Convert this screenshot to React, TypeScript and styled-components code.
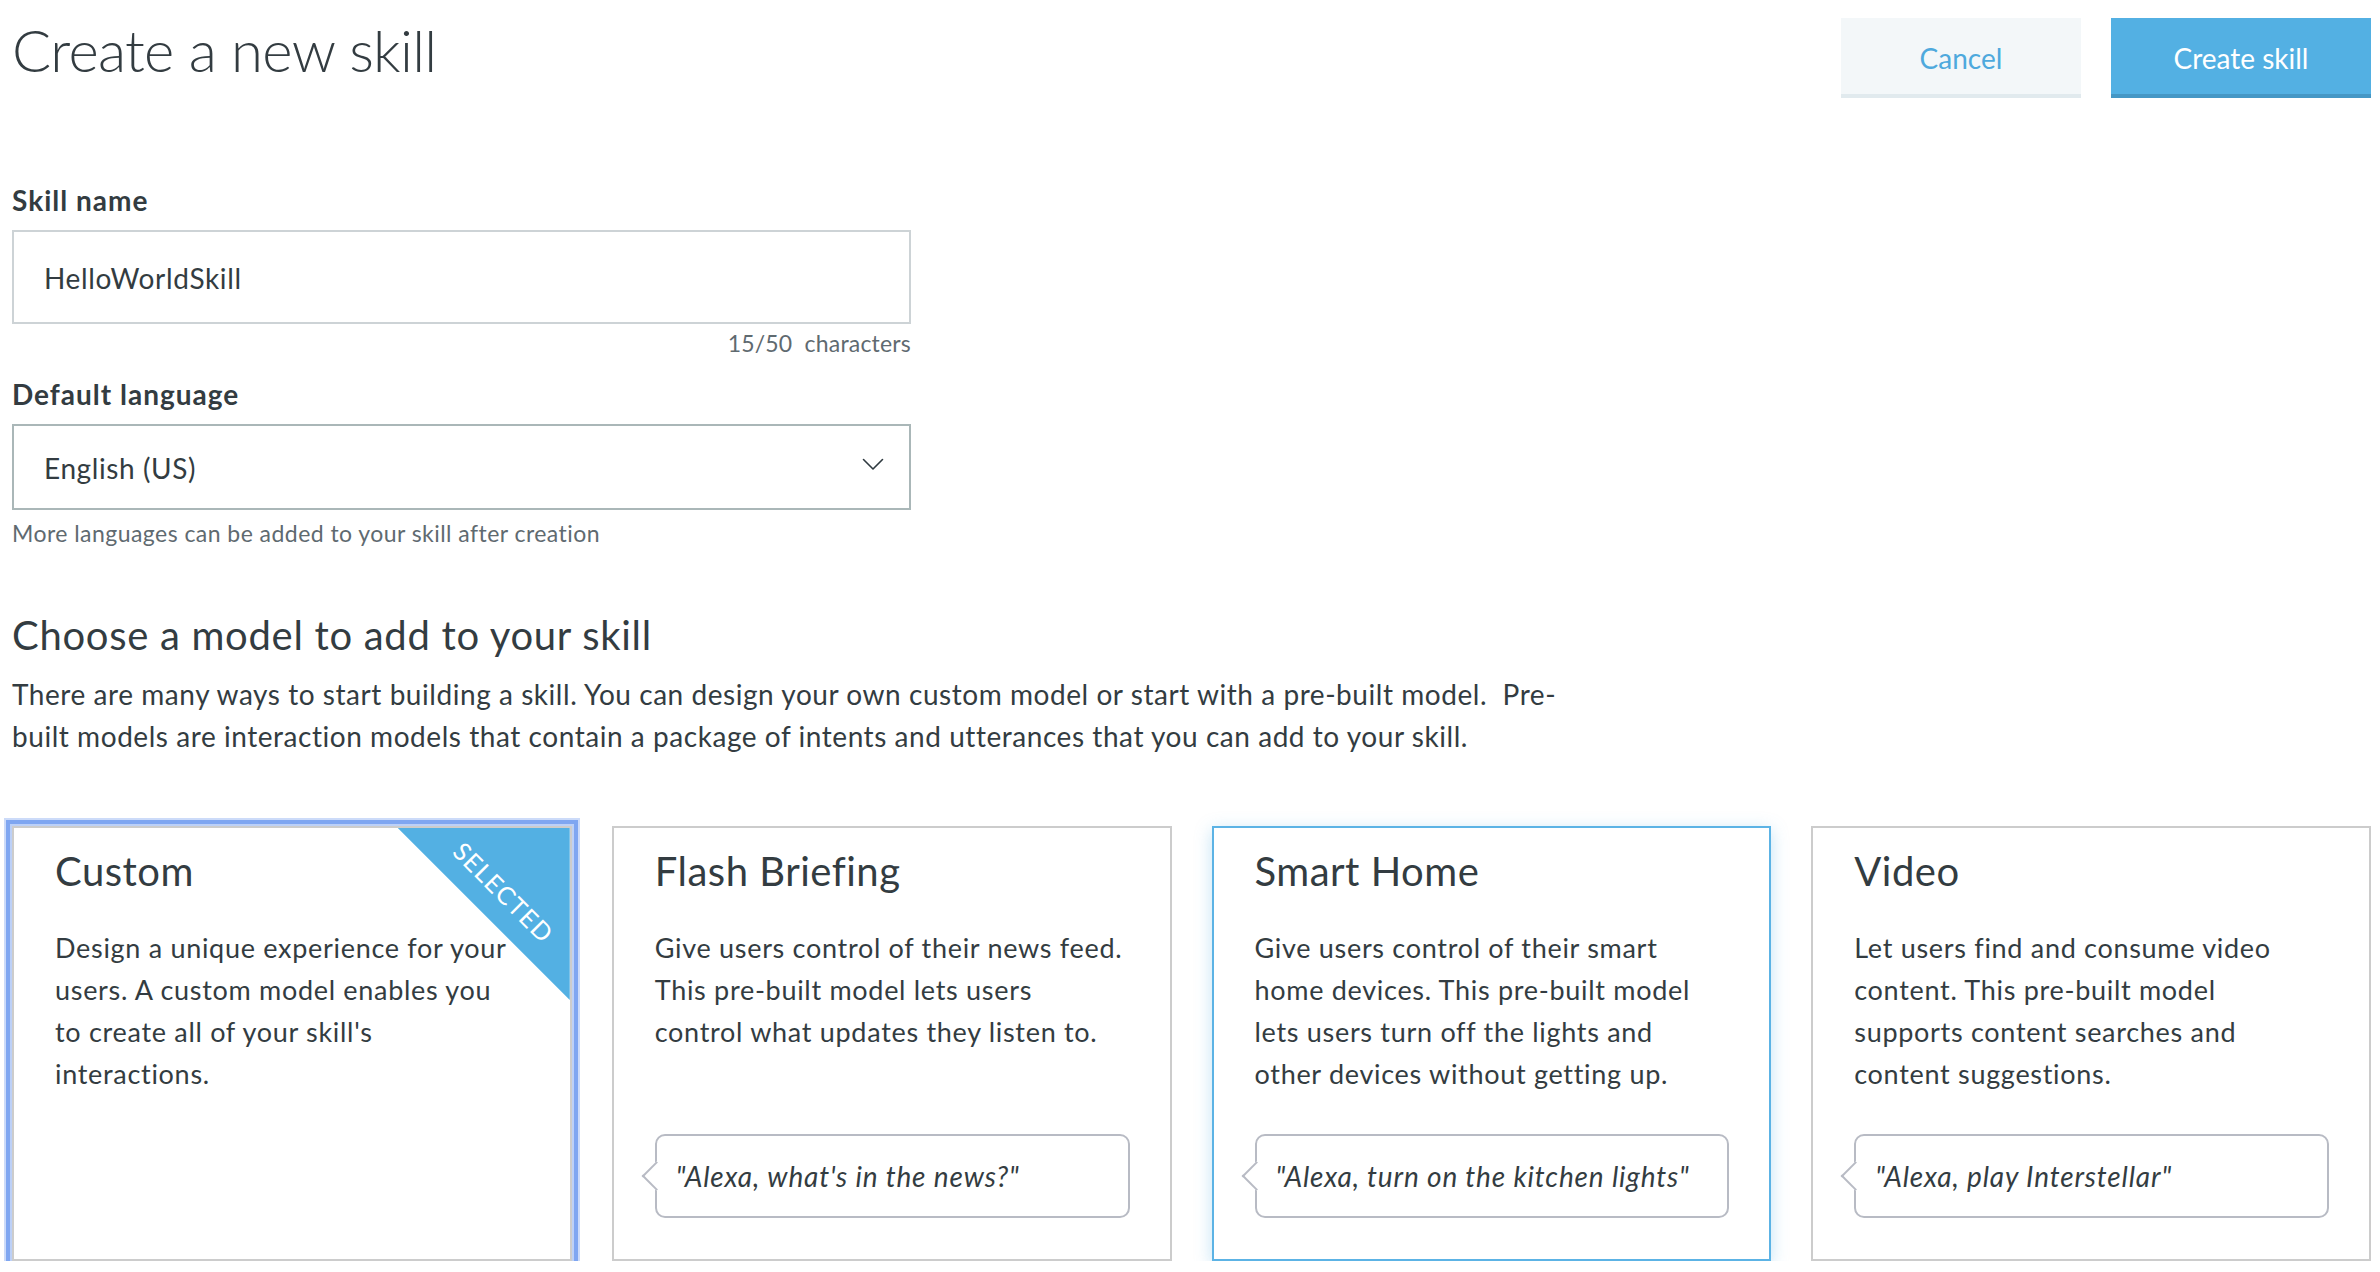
import React from "react";
import styled, { createGlobalStyle } from "styled-components";

const GlobalStyle = createGlobalStyle`
  html, body {
    margin: 0;
    padding: 0;
    background: #fff;
  }
  body {
    font-family: "Lato", "Noto Sans", sans-serif;
    color: #333c41;
  }
  * {
    box-sizing: border-box;
  }
`;

type Model = {
  title: string;
  lines: string[];
  utterance?: string;
  state?: "selected" | "hover";
};

// 설명 문구는 원본 화면의 줄바꿈 그대로 유지
const models: Model[] = [
  {
    title: "Custom",
    lines: [
      "Design a unique experience for your",
      "users. A custom model enables you",
      "to create all of your skill's",
      "interactions.",
    ],
    state: "selected",
  },
  {
    title: "Flash Briefing",
    lines: [
      "Give users control of their news feed.",
      "This pre-built model lets users",
      "control what updates they listen to.",
    ],
    utterance: "\"Alexa, what's in the news?\"",
  },
  {
    title: "Smart Home",
    lines: [
      "Give users control of their smart",
      "home devices. This pre-built model",
      "lets users turn off the lights and",
      "other devices without getting up.",
    ],
    utterance: "\"Alexa, turn on the kitchen lights\"",
    state: "hover",
  },
  {
    title: "Video",
    lines: [
      "Let users find and consume video",
      "content. This pre-built model",
      "supports content searches and",
      "content suggestions.",
    ],
    utterance: "\"Alexa, play Interstellar\"",
  },
];

const App = () => {
  return (
    <>
      <GlobalStyle />
      <Page>
        <Header>
          <Title>Create a new skill</Title>
          <Actions>
            <Button $variant="secondary" $width={240}>
              Cancel
            </Button>
            <Button $variant="primary" $width={260}>
              Create skill
            </Button>
          </Actions>
        </Header>

        <Form>
          <Label>Skill name</Label>
          <Field>HelloWorldSkill</Field>
          <Counter>15/50&nbsp; characters</Counter>

          <Label $gap={21}>Default language</Label>
          <SelectBox>
            <span>English (US)</span>
            <svg width="22" height="13" viewBox="0 0 22 13" fill="none">
              <polyline
                points="1.5,1.5 11,11 20.5,1.5"
                stroke="#2f3a40"
                strokeWidth="1.6"
                strokeLinecap="round"
                strokeLinejoin="round"
              />
            </svg>
          </SelectBox>
          <Hint>More languages can be added to your skill after creation</Hint>
        </Form>

        <SectionTitle>Choose a model to add to your skill</SectionTitle>
        <Intro>
          There are many ways to start building a skill. You can design your
          own custom model or start with a pre-built model.&nbsp; Pre-built
          models are interaction models that contain a package of intents and
          utterances that you can add to your skill.
        </Intro>

        <CardGrid>
          {models.map((m) => (
            <Card key={m.title} $state={m.state}>
              {m.state === "selected" && (
                <Ribbon>
                  <RibbonText>SELECTED</RibbonText>
                </Ribbon>
              )}
              <CardTitle>{m.title}</CardTitle>
              <CardText>
                {m.lines.map((line) => (
                  <span key={line}>{line}</span>
                ))}
              </CardText>
              {m.utterance && <Bubble>{m.utterance}</Bubble>}
            </Card>
          ))}
        </CardGrid>
      </Page>
    </>
  );
};

const Page = styled.div`
  padding: 0 9px 0 12px;
  display: flex;
  flex-direction: column;
`;

const Header = styled.div`
  display: flex;
  justify-content: space-between;
  align-items: flex-start;
  padding-top: 15px;
`;

const Title = styled.h1`
  margin: 0;
  font-size: 58px;
  line-height: 70px;
  font-weight: 300;
  letter-spacing: -0.7px;
  color: #333c41;
`;

const Actions = styled.div`
  display: flex;
  gap: 30px;
  margin-top: 3px;
`;

const Button = styled.button<{ $variant: "primary" | "secondary"; $width: number }>`
  width: ${({ $width }) => $width}px;
  height: 80px;
  border: none;
  border-bottom: 4px solid
    ${({ $variant }) => ($variant === "primary" ? "#4597c5" : "#e1eaee")};
  background: ${({ $variant }) => ($variant === "primary" ? "#53b0e3" : "#f3f7f9")};
  color: ${({ $variant }) => ($variant === "primary" ? "#ffffff" : "#4ea9dd")};
  font-family: "Lato", "Noto Sans", sans-serif;
  font-size: 28px;
  padding: 4px 0 0;
  cursor: pointer;
`;

const Form = styled.div`
  width: 899px;
  display: flex;
  flex-direction: column;
  margin-top: 86px;
`;

const Label = styled.label<{ $gap?: number }>`
  font-size: 28px;
  line-height: 33px;
  font-weight: 700;
  letter-spacing: 1px;
  color: #333c41;
  margin-top: ${({ $gap }) => $gap ?? 0}px;
  margin-bottom: 13px;
`;

const Field = styled.div`
  height: 94px;
  border: 2px solid #cdd3d6;
  display: flex;
  align-items: center;
  padding: 2px 30px 0;
  font-size: 28px;
  letter-spacing: 0.65px;
  color: #333c41;
`;

const Counter = styled.div`
  margin-top: 5px;
  text-align: right;
  font-size: 23px;
  line-height: 28px;
  letter-spacing: 0.2px;
  color: #5f6a70;
`;

const SelectBox = styled.div`
  height: 86px;
  border: 2px solid #aab7b8;
  display: flex;
  align-items: center;
  justify-content: space-between;
  padding: 0 25px 6px 30px;
  font-size: 28px;
  letter-spacing: 0.6px;
  color: #333c41;

  span {
    padding-top: 8px;
  }
`;

const Hint = styled.div`
  margin-top: 9px;
  font-size: 23px;
  line-height: 28px;
  letter-spacing: 0.45px;
  color: #5f6a70;
`;

const SectionTitle = styled.h2`
  margin: 64px 0 0;
  font-size: 40px;
  line-height: 48px;
  font-weight: 400;
  letter-spacing: 0.7px;
  color: #333c41;
`;

const Intro = styled.p`
  margin: 14px 0 0;
  max-width: 1565px;
  font-size: 28px;
  line-height: 42px;
  letter-spacing: 0.55px;
  color: #333c41;
`;

const CardGrid = styled.div`
  display: grid;
  grid-template-columns: repeat(4, 1fr);
  gap: 40px;
  margin-top: 69px;
`;

const Card = styled.div<{ $state?: "selected" | "hover" }>`
  position: relative;
  height: 435px;
  display: flex;
  flex-direction: column;
  padding: 19px 40px 41px 41px;
  background: #fff;
  border: 2px solid ${({ $state }) => ($state === "hover" ? "#5cb3e5" : "#cccccc")};
  box-shadow: ${({ $state }) =>
    $state === "selected"
      ? "0 0 0 2px #bcd0f7, 0 0 0 6px #7fa6f1, 0 0 0 8px rgba(127,166,241,0.4)"
      : $state === "hover"
      ? "0 4px 16px rgba(82,176,226,0.35)"
      : "none"};
`;

const Ribbon = styled.div`
  position: absolute;
  top: 0;
  right: 0;
  width: 172px;
  height: 172px;
  background: #53b0e3;
  clip-path: polygon(0 0, 100% 0, 100% 100%);
`;

const RibbonText = styled.span`
  position: absolute;
  left: 106px;
  top: 64px;
  transform: translate(-50%, -50%) rotate(45deg);
  color: #fff;
  font-size: 25px;
  letter-spacing: 1.2px;
  white-space: nowrap;
`;

const CardTitle = styled.h3`
  margin: 0;
  font-size: 40px;
  line-height: 48px;
  font-weight: 400;
  letter-spacing: 0.5px;
  color: #333c41;
`;

const CardText = styled.p`
  margin: 32px 0 0;
  display: flex;
  flex-direction: column;
  font-size: 27px;
  line-height: 42px;
  letter-spacing: 0.7px;
  color: #333c41;

  span {
    white-space: nowrap;
  }
`;

const Bubble = styled.div`
  position: relative;
  margin-top: auto;
  height: 84px;
  border: 2px solid #b8bbc4;
  border-radius: 10px;
  display: flex;
  align-items: center;
  padding-left: 19px;
  font-size: 28px;
  font-style: italic;
  letter-spacing: 0.85px;
  color: #333c41;
  white-space: nowrap;

  &::before {
    content: "";
    position: absolute;
    left: -11px;
    top: 50%;
    width: 19px;
    height: 19px;
    background: #fff;
    border-left: 2px solid #b8bbc4;
    border-bottom: 2px solid #b8bbc4;
    transform: translateY(-50%) rotate(45deg);
  }
`;

export default App;
